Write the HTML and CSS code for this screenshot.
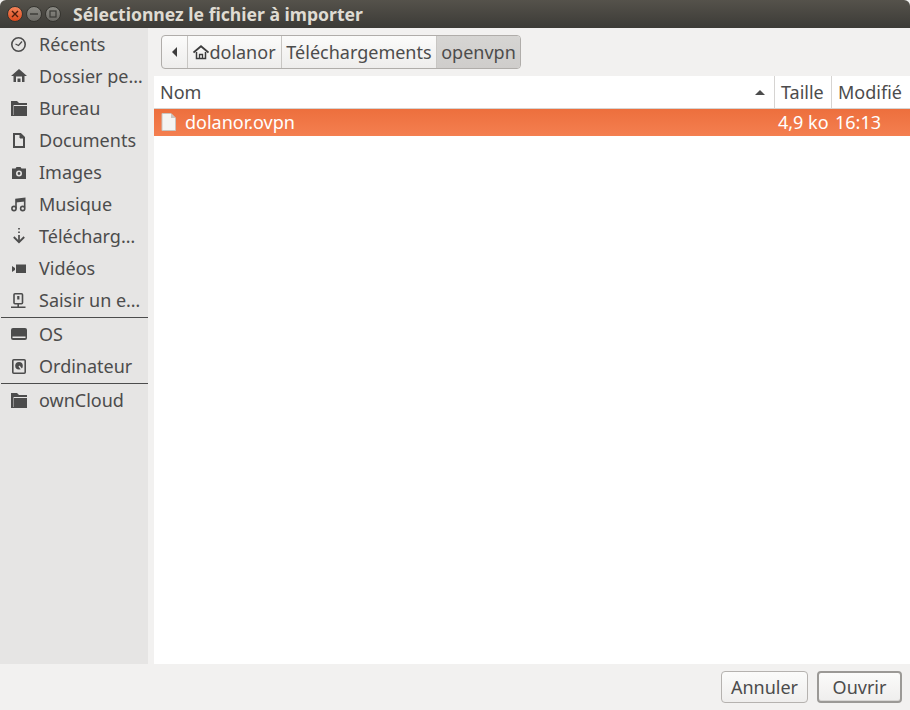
FILE: index.html
```html
<!DOCTYPE html>
<html lang="fr">
<head>
    <meta charset="UTF-8">
    <meta name="viewport" content="width=device-width, initial-scale=1.0">
    <title>Sélectionnez le fichier à importer</title>
    <link rel="stylesheet" href="styles.css">
</head>
<body>
    <div class="titlebar">
        <div class="wm-buttons">
            <span class="wm-btn wm-close">
                <svg width="8" height="8" viewBox="0 0 8 8"><path d="M1 1l6 6M7 1l-6 6" stroke="#4a1c0c" stroke-width="1.4"/></svg>
            </span>
            <span class="wm-btn">
                <svg width="8" height="8" viewBox="0 0 8 8"><path d="M0 4h8" stroke="#3a3a36" stroke-width="1.4"/></svg>
            </span>
            <span class="wm-btn">
                <svg width="8" height="8" viewBox="0 0 8 8"><rect x="1" y="1" width="6" height="6" fill="none" stroke="#3a3a36" stroke-width="1.2"/></svg>
            </span>
        </div>
        <div class="title">Sélectionnez le fichier à importer</div>
    </div>

    <div class="content">
        <div class="sidebar">
            <div class="place">
                <svg class="place-icon" viewBox="0 0 16 16"><circle cx="7.500" cy="8.500" r="6.700" fill="none" stroke="#4c4c4c" stroke-width="1.600"/><path d="M4.500 8l3 1.500 3.500-4" fill="none" stroke="#4c4c4c" stroke-width="1.300"/></svg>
                <span>Récents</span>
            </div>
            <div class="place">
                <svg class="place-icon" viewBox="0 0 16 16"><path d="M8 1L0 8h2.500v6h11V8H16z" fill="#4c4c4c"/><path d="M5 8.500h6V14H9.500v-3.500h-3V14H5z" fill="#e6e5e4"/></svg>
                <span>Dossier pe…</span>
            </div>
            <div class="place">
                <svg class="place-icon" viewBox="0 0 16 16"><path d="M0 1h6l2 2h8v13H0z" fill="#4c4c4c"/><path d="M3 5h13v1H3z" fill="#e6e5e4"/><path d="M2 5h1v10H2z" fill="#e6e5e4" opacity=".45"/></svg>
                <span>Bureau</span>
            </div>
            <div class="place">
                <svg class="place-icon" viewBox="0 0 16 16"><path d="M3 2h6.500L13 5.500V15H3z" fill="none" stroke="#4c4c4c" stroke-width="2"/><path d="M9 2v4h4" fill="#4c4c4c" stroke="#4c4c4c"/></svg>
                <span>Documents</span>
            </div>
            <div class="place">
                <svg class="place-icon" viewBox="0 0 16 16"><path d="M1 4.500h3.500l1-1.500h4l1 1.500H15V15H1z" fill="#4c4c4c"/><circle cx="8" cy="9.500" r="2.200" fill="none" stroke="#e6e5e4" stroke-width="1.600"/></svg>
                <span>Images</span>
            </div>
            <div class="place">
                <svg class="place-icon" viewBox="0 0 16 16"><path d="M5 12.500V3.500L13.700 2.500v9" fill="none" stroke="#4c4c4c" stroke-width="1.600"/><path d="M5 3.500L13.700 2.500v3L5 6.500z" fill="#4c4c4c"/><circle cx="3" cy="12.500" r="2.100" fill="none" stroke="#4c4c4c" stroke-width="1.600"/><circle cx="11.700" cy="12.500" r="2.100" fill="none" stroke="#4c4c4c" stroke-width="1.600"/></svg>
                <span>Musique</span>
            </div>
            <div class="place">
                <svg class="place-icon" viewBox="0 0 16 16"><path d="M8 0v1.500M8 3.500v1.500M8 7v6" stroke="#4c4c4c" stroke-width="1.700" fill="none"/><path d="M2.800 9L8 14.200 13.200 9" stroke="#4c4c4c" stroke-width="1.800" fill="none"/></svg>
                <span>Télécharg…</span>
            </div>
            <div class="place">
                <svg class="place-icon" viewBox="0 0 16 16"><rect x="5" y="4.500" width="10" height="8.500" fill="#4c4c4c"/><path d="M1 6l3 2v2l-3 2z" fill="#4c4c4c"/></svg>
                <span>Vidéos</span>
            </div>
            <div class="place">
                <svg class="place-icon" viewBox="0 0 16 16"><rect x="3" y="1.800" width="8.500" height="10" rx="1" fill="none" stroke="#4c4c4c" stroke-width="1.600"/><rect x="6.200" y="4" width="2.200" height="3.500" fill="#4c4c4c"/><path d="M7.200 11.500V14.500M0 15.200h14.500" stroke="#4c4c4c" stroke-width="1.600" fill="none"/></svg>
                <span>Saisir un e…</span>
            </div>
            <div class="separator"></div>
            <div class="place">
                <svg class="place-icon" viewBox="0 0 16 16"><path d="M2 2h12a2 2 0 0 1 2 2v8a2 2 0 0 1-2 2H2a2 2 0 0 1-2-2V4a2 2 0 0 1 2-2z" fill="#4c4c4c"/><path d="M1.500 10.500h13V12h-13z" fill="#e6e5e4"/></svg>
                <span>OS</span>
            </div>
            <div class="place">
                <svg class="place-icon" viewBox="0 0 16 16"><rect x="1.800" y="1.800" width="12.400" height="13.400" rx="1" fill="none" stroke="#4c4c4c" stroke-width="1.600"/><circle cx="8" cy="7.800" r="3.800" fill="#4c4c4c"/><path d="M8 8l3.500 4.500" stroke="#e6e5e4" stroke-width="1.300"/></svg>
                <span>Ordinateur</span>
            </div>
            <div class="separator"></div>
            <div class="place">
                <svg class="place-icon" viewBox="0 0 16 16"><path d="M0 1h6l2 2h8v13H0z" fill="#4c4c4c"/><path d="M3 5h13v1H3z" fill="#e6e5e4"/><path d="M2 5h1v10H2z" fill="#e6e5e4" opacity=".45"/></svg>
                <span>ownCloud</span>
            </div>
        </div>

        <div class="main">
            <div class="pathbar">
                <div class="crumbs">
                    <div class="crumb crumb-back">
                        <svg width="6" height="10" viewBox="0 0 6 10"><path d="M5 0v10L0 5z" fill="#3c3c3c"/></svg>
                    </div>
                    <div class="crumb crumb-home">
                        <svg width="16" height="15" viewBox="0 0 16 15"><path d="M.5 7.500L8 1.200l7.500 6.300" fill="none" stroke="#3c3c3c" stroke-width="1.800"/><path d="M3.500 7v6.500h9V7" fill="none" stroke="#3c3c3c" stroke-width="1.500"/><path d="M6.500 14V9.500h3V14" fill="none" stroke="#3c3c3c" stroke-width="1.300"/></svg>
                        <span>dolanor</span>
                    </div>
                    <div class="crumb crumb-downloads">Téléchargements</div>
                    <div class="crumb crumb-current">openvpn</div>
                </div>
            </div>
            <div class="filelist">
                <div class="list-header">
                    <div class="col col-name">
                        <span>Nom</span>
                        <svg width="10" height="5" viewBox="0 0 10 5"><path d="M5 0l5 5H0z" fill="#4c4c4c"/></svg>
                    </div>
                    <div class="col col-size">Taille</div>
                    <div class="col col-date">Modifié</div>
                </div>
                <div class="file-row">
                    <div class="col col-name">
                        <svg class="file-icon" width="15" height="18" viewBox="0 0 15 18"><path d="M1 .500h9l4.500 4.500v12.500H1z" fill="#f4f4f2" stroke="#c9c4bf"/><path d="M10 .500V5h4.500z" fill="#c9c4bf"/></svg>
                        <span>dolanor.ovpn</span>
                    </div>
                    <div class="col col-size">4,9 ko</div>
                    <div class="col col-date">16:13</div>
                </div>
            </div>
        </div>
    </div>

    <div class="footer">
        <button class="btn">Annuler</button>
        <button class="btn btn-default">Ouvrir</button>
    </div>
</body>
</html>
```

FILE: styles.css
```css
* {
    box-sizing: border-box;
}
html, body {
    height: 100%;
}
body {
    margin: 0;
    display: flex;
    flex-direction: column;
    font-family: "Noto Sans", "Open Sans", sans-serif;
    font-size: 18px;
    color: #4c4c4c;
    background-color: #f2f1f0;
    overflow: hidden;
}

/* title bar */
.titlebar {
    height: 28px;
    flex: none;
    display: flex;
    align-items: center;
    padding-left: 7px;
    background: linear-gradient(#55524b, #3c3b37);
    border-radius: 6px 6px 0 0;
}
.wm-buttons {
    display: flex;
    gap: 3px;
    width: 66px;
}
.wm-btn {
    width: 16px;
    height: 16px;
    border-radius: 50%;
    display: flex;
    align-items: center;
    justify-content: center;
    background: linear-gradient(#8b8a84, #6b6a65);
    border: 1px solid #35342f;
}
.wm-close {
    background: linear-gradient(#f4845a, #dc4a1d);
}
.title {
    color: #dfdbd2;
    font-weight: 700;
    font-size: 17.6px;
}

.content {
    flex: 1;
    display: flex;
    min-height: 0;
}

/* places */
.sidebar {
    width: 148px;
    flex: none;
    background-color: #e6e5e4;
}
.place {
    height: 32px;
    display: flex;
    align-items: center;
    padding-left: 11px;
    gap: 12px;
    white-space: nowrap;
}
.place-icon {
    width: 16px;
    height: 16px;
    flex: none;
}
.separator {
    height: 2px;
    margin-left: 1px;
    border-top: 1px solid #4c4c4c;
    margin-top: 1px;
    margin-bottom: -1px;
}

.main {
    flex: 1;
    min-width: 0;
    display: flex;
    flex-direction: column;
    padding-left: 6px;
}

/* path bar */
.pathbar {
    height: 48px;
    flex: none;
    padding: 7px 0 0 7px;
}
.crumbs {
    display: inline-flex;
    height: 34px;
    border: 1px solid #b0adaa;
    border-radius: 4px;
    background: linear-gradient(#fbfbfa, #eeedec);
}
.crumb {
    display: flex;
    align-items: center;
    justify-content: center;
    border-left: 1px solid #c8c6c3;
    white-space: nowrap;
}
.crumb-back {
    width: 25px;
    border-left: none;
}
.crumb-home {
    width: 94px;
    gap: 0;
}
.crumb-downloads {
    width: 155px;
}
.crumb-current {
    width: 84px;
    background: linear-gradient(#d6d5d3, #cfcdcb);
    border-radius: 0 3px 3px 0;
}

/* file list */
.filelist {
    flex: 1;
    background-color: #fff;
}
.list-header {
    height: 33px;
    display: flex;
    border-bottom: 1px solid #d6d4d2;
}
.file-row {
    height: 27px;
    display: flex;
    align-items: center;
    padding-bottom: 1px;
    color: #fff;
    background: linear-gradient(#ed6f3d, #f47f50);
}
.col {
    display: flex;
    align-items: center;
    height: 100%;
    white-space: nowrap;
}
.col-name {
    flex: 1;
    min-width: 0;
    padding-left: 6px;
}
.col-size {
    width: 57px;
    padding-left: 6px;
}
.col-date {
    width: 79px;
    padding-left: 6px;
}
.list-header .col-name {
    justify-content: space-between;
    padding-right: 9px;
}
.list-header .col-size, .list-header .col-date {
    border-left: 1px solid #d6d4d2;
}
.file-row .col-name {
    padding-left: 7px;
    gap: 9px;
}
.file-row .col-size {
    padding-left: 4px;
}
.file-row .col-date {
    padding-left: 4px;
}

/* buttons */
.footer {
    height: 46px;
    flex: none;
    display: flex;
    justify-content: flex-end;
    align-items: flex-start;
    gap: 9px;
    padding: 7px 8px 0 0;
}
.btn {
    height: 32px;
    width: 87px;
    font-family: inherit;
    font-size: 18px;
    color: #4c4c4c;
    border: 1px solid #b5b2af;
    border-radius: 4px;
    background: linear-gradient(#fbfbfa, #efeeed);
    padding: 0;
}
.btn-default {
    width: 85px;
    border: 2px solid #9b9996;
    box-shadow: inset 0 -1px 0 #d8d6d4;
}
```
